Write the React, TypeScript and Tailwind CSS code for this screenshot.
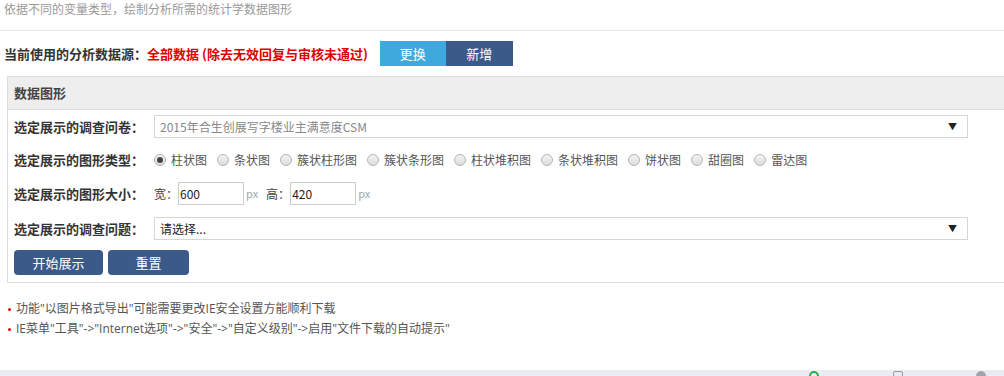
import { useState } from "react";

const chartTypes = ["柱状图", "条状图", "簇状柱形图", "簇状条形图", "柱状堆积图", "条状堆积图", "饼状图", "甜圈图", "雷达图"];

function Radio({ checked, label, onClick }: { checked: boolean; label: string; onClick: () => void }) {
  return (
    <label className="flex items-center gap-[5px] mr-[10px] cursor-pointer" onClick={onClick}>
      <span className="w-[12px] h-[12px] rounded-full border border-[#b5b5b5] bg-gradient-to-b from-[#f4f4f4] to-[#dcdcdc] flex items-center justify-center">
        {checked && <span className="w-[6px] h-[6px] rounded-full bg-[#444]" />}
      </span>
      <span>{label}</span>
    </label>
  );
}

function Select({ value, muted }: { value: string; muted?: boolean }) {
  return (
    <div className="w-[814px] h-[23px] border border-[#d5d5d5] bg-white flex items-center justify-between pl-[5px] pr-[10px]">
      <span className={muted ? "text-[#888]" : "text-[#222]"}>{value}</span>
      <span className="text-[9px] text-[#222]">▼</span>
    </div>
  );
}

export default function App() {
  const [type, setType] = useState(0);

  return (
    <div
      className="w-[1004px] h-[376px] overflow-hidden bg-white text-[12px] text-[#555] relative"
      style={{ fontFamily: '"Noto Sans CJK SC", "Noto Sans", sans-serif' }}
    >
      {/* Intro */}
      <div className="h-[31px] border-b border-[#e6e6e6] pl-[4px] pt-[1px] text-[#9a9a9a] leading-[16px]">
        依据不同的变量类型，绘制分析所需的统计学数据图形
      </div>

      {/* Data source */}
      <div className="flex items-center h-[25px] pl-[4px] mt-[10px]">
        <span className="font-bold text-[13px] text-[#333]">当前使用的分析数据源：</span>
        <span className="font-bold text-[13px] text-[#e00000]">全部数据 (除去无效回复与审核未通过)</span>
        <button className="ml-[12px] w-[66px] h-[25px] bg-[#3fa8dd] text-white text-[13px]">更换</button>
        <button className="w-[67px] h-[25px] bg-[#3b5a8a] text-white text-[13px]">新增</button>
      </div>

      {/* Panel */}
      <div className="ml-[7px] mt-[10px] w-[1010px] h-[207px] border border-[#dddddd]">
        <div className="h-[33px] bg-[#eeeeee] border-b border-[#dddddd] flex items-center pl-[6px] font-bold text-[13px] text-[#444]">
          数据图形
        </div>

        <div className="pl-[6px] pt-[5px]">
          <div className="flex items-center h-[23px]">
            <span className="w-[140px] font-bold text-[13px] text-[#333]">选定展示的调查问卷：</span>
            <Select value="2015年合生创展写字楼业主满意度CSM" muted />
          </div>

          <div className="flex items-center h-[23px] mt-[10px] text-[#555]">
            <span className="w-[140px] font-bold text-[13px] text-[#333]">选定展示的图形类型：</span>
            {chartTypes.map((t, i) => (
              <Radio key={t} label={t} checked={type === i} onClick={() => setType(i)} />
            ))}
          </div>

          <div className="flex items-center h-[23px] mt-[11px]">
            <span className="w-[140px] font-bold text-[13px] text-[#333]">选定展示的图形大小：</span>
            <span className="text-[#444] text-[12px]">宽：</span>
            <div className="w-[66px] h-[23px] border border-[#cccccc] flex items-center pl-[1px] text-[#222]">600</div>
            <span className="text-[#9aa] text-[11px] ml-[2px]">px</span>
            <span className="text-[#444] text-[12px] ml-[8px]">高：</span>
            <div className="w-[66px] h-[23px] border border-[#cccccc] flex items-center pl-[1px] text-[#222]">420</div>
            <span className="text-[#9aa] text-[11px] ml-[2px]">px</span>
          </div>

          <div className="flex items-center h-[23px] mt-[12px]">
            <span className="w-[140px] font-bold text-[13px] text-[#333]">选定展示的调查问题：</span>
            <Select value="请选择..." />
          </div>

          <div className="flex items-center gap-[5px] mt-[10px]">
            <button className="w-[89px] h-[25px] rounded-[4px] bg-[#3b5a8a] text-white text-[13px]">开始展示</button>
            <button className="w-[81px] h-[25px] rounded-[4px] bg-[#3b5a8a] text-white text-[13px]">重置</button>
          </div>
        </div>
      </div>

      {/* Notes */}
      <div
        className="pl-[8px] mt-[16px] text-[12px] text-[#555] leading-[20px]"
        style={{ fontFamily: '"Open Sans", "Noto Sans CJK SC", sans-serif' }}
      >
        <div className="flex items-center">
          <span className="w-[3px] h-[3px] rounded-full bg-[#e00000] mr-[5px]" />
          <span>功能"以图片格式导出"可能需要更改IE安全设置方能顺利下载</span>
        </div>
        <div className="flex items-center">
          <span className="w-[3px] h-[3px] rounded-full bg-[#e00000] mr-[5px]" />
          <span>IE菜单"工具"-&gt;"Internet选项"-&gt;"安全"-&gt;"自定义级别"-&gt;启用"文件下载的自动提示"</span>
        </div>
      </div>

      {/* Bottom strip */}
      <div className="absolute left-0 right-0 bottom-0 h-[6px] bg-[#e9edf3]">
        <span className="absolute left-[809px] top-[1px] w-[10px] h-[10px] rounded-full border-2 border-[#22b14c]" />
        <span className="absolute left-[893px] top-[1px] w-[10px] h-[10px] rounded-[2px] border border-[#999]" />
        <span className="absolute left-[976px] top-[1px] w-[10px] h-[10px] rounded-full bg-[#a0a4ad]" />
      </div>
    </div>
  );
}
